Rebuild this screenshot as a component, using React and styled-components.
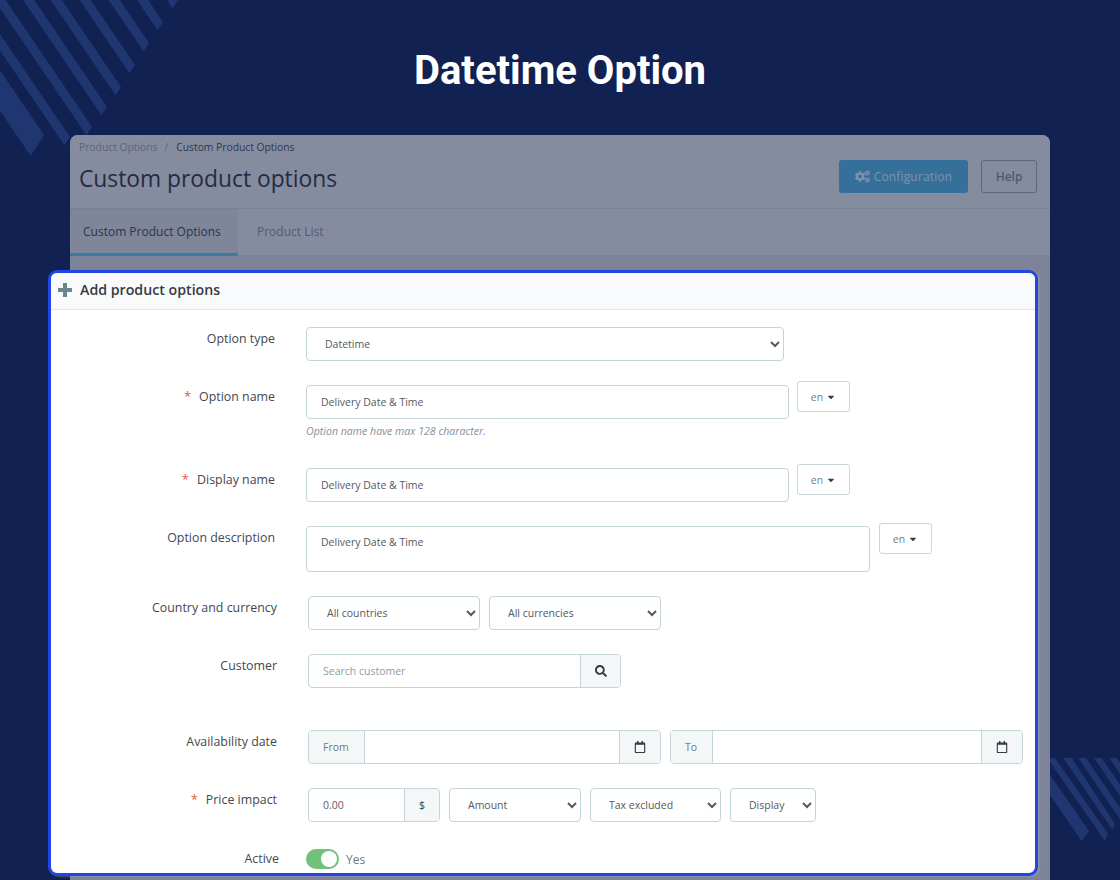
import React from "react";
import styled, { createGlobalStyle } from "styled-components";
import { FaSearch, FaCogs, FaCaretDown, FaRegCalendar } from "react-icons/fa";

const Global = createGlobalStyle`
  html, body { margin: 0; padding: 0; background: #112252; }
  * { box-sizing: border-box; }
`;

const Page = styled.div`
  position: relative;
  width: 1120px;
  height: 880px;
  overflow: hidden;
  background: #112252;
  font-family: "Open Sans", "Liberation Sans", sans-serif;
`;
const Decor = styled.svg`
  position: absolute;
  left: 0;
  top: 0;
`;
const Heading = styled.h1`
  position: relative;
  margin: 0;
  height: 135px;
  padding-top: 48px;
  text-align: center;
  font: 700 40px/46px Roboto, "Liberation Sans", sans-serif;
  color: #fff;
`;
const Panel = styled.section`
  position: relative;
  margin: 0 70px;
  height: 745px;
  border-radius: 8px 8px 0 0;
  background: #7d8398;
  display: flex;
  flex-direction: column;
`;
const PanelHead = styled.header`
  height: 74px;
  padding: 6px 13px 0 9px;
  background: #868c9f;
  border-radius: 8px 8px 0 0;
  border-bottom: 1px solid #7b8194;
  display: flex;
  justify-content: space-between;
`;
const Crumbs = styled.nav`
  font-size: 10.3px;
  line-height: 13px;
  color: #5b647e;
  span { margin: 0 8px 0 7px; }
  b { font-weight: 400; color: #2e3750; }
`;
const PageTitle = styled.h2`
  margin: 10px 0 0;
  font-size: 22.8px;
  line-height: 30px;
  font-weight: 400;
  color: #232b45;
`;
const Actions = styled.div`
  display: flex;
  gap: 13px;
  padding-top: 19px;
`;
const PrimaryButton = styled.div`
  width: 129px;
  height: 33px;
  border-radius: 3px;
  background: #35709a;
  color: #7d93ad;
  font-size: 12px;
  letter-spacing: 0.15px;
  display: flex;
  align-items: center;
  justify-content: center;
  gap: 4px;
`;
const OutlineButton = styled.div`
  width: 56px;
  height: 33px;
  border-radius: 3px;
  border: 1px solid #5a6884;
  color: #4b5977;
  font-size: 12px;
  font-weight: 600;
  display: flex;
  align-items: center;
  justify-content: center;
`;
const Tabs = styled.div`
  height: 47px;
  background: #868c9f;
  border-bottom: 1px solid #7b8194;
  display: flex;
`;
const Tab = styled.div`
  height: 47px;
  width: ${p => (p.$active ? "168px" : "auto")};
  padding-left: ${p => (p.$active ? "13px" : "19px")};
  display: flex;
  align-items: center;
  font-size: 12px;
  color: ${p => (p.$active ? "#2b3450" : "#515b77")};
  background: ${p => (p.$active ? "#7f869a" : "transparent")};
  border-bottom: 3px solid ${p => (p.$active ? "#3b7ba2" : "transparent")};
`;
const Card = styled.div`
  margin: 14px 12px 0 -22px;
  height: 606px;
  background: #fff;
  border: 3px solid #2345e6;
  border-radius: 9px;
  overflow: hidden;
  box-shadow: 2px 1px 2px rgba(170, 175, 190, 0.35);
`;
const CardHead = styled.div`
  height: 37px;
  padding: 0 0 3px 7px;
  background: #f9fafc;
  border-bottom: 1px solid #dfe6ea;
  display: flex;
  align-items: center;
  gap: 8px;
  font-size: 14.2px;
  font-weight: 600;
  color: #363a41;
`;
const PlusIcon = styled.svg`
  width: 14px;
  height: 14px;
  flex: none;
  fill: #6c868e;
`;
const Form = styled.div`
  padding-top: 17px;
`;
const Row = styled.div`
  display: flex;
  margin-top: ${p => p.$top ?? 24}px;
  &:first-child { margin-top: 0; }
`;
const Label = styled.div`
  width: 224px;
  margin-right: 31px;
  padding-top: ${p => p.$pad ?? 3}px;
  flex: none;
  text-align: right;
  font-size: 12.4px;
  line-height: 17px;
  color: #43474e;
  transform: translateX(${p => p.$shift || 0}px);
  i { font-style: normal; color: #e0603c; margin-right: 8px; font-size: 13px; }
`;
const Controls = styled.div`
  display: flex;
  align-items: flex-start;
  gap: 9px;
  padding-left: ${p => p.$indent || 0}px;
`;
const fieldCss = `
  height: 34px;
  border: 1px solid #c4d4d8;
  border-radius: 4px;
  background: #fff;
  font-family: "Open Sans", "Liberation Sans", sans-serif;
  font-size: 10.5px;
  color: #55595e;
`;
const Select = styled.select`
  ${fieldCss}
  width: ${p => p.$w}px;
  padding: 0 0 0 ${p => p.$pad ?? 14}px;
`;
const Input = styled.div`
  ${fieldCss}
  width: ${p => p.$w}px;
  padding: 0 14px;
  display: flex;
  align-items: center;
  flex: none;
`;
const Area = styled.div`
  ${fieldCss}
  height: 46px;
  width: ${p => p.$w}px;
  padding: 8px 14px;
  line-height: 14px;
`;
const FieldStack = styled.div`
  display: flex;
  flex-direction: column;
`;
const Hint = styled.div`
  margin-top: 6px;
  font-size: 10.6px;
  line-height: 13px;
  font-style: italic;
  color: #8a8f93;
  height: 13px;
`;
const LangButton = styled.div`
  width: 53px;
  height: 31px;
  margin-top: ${p => p.$top ?? -4}px;
  margin-left: ${p => p.$gap ?? 0}px;
  border: 1px solid #c9d6da;
  border-radius: 3px;
  display: flex;
  align-items: center;
  justify-content: center;
  gap: 3px;
  font-size: 10.5px;
  color: #6c7f8f;
  svg { color: #363a41; font-size: 10px; }
`;
const Group = styled.div`
  display: flex;
  width: ${p => p.$w}px;
  height: 34px;
  border: 1px solid #c4d4d8;
  border-radius: 4px;
  overflow: hidden;
  flex: none;
`;
const GroupInput = styled.div`
  flex: 1;
  padding: 0 14px;
  display: flex;
  align-items: center;
  font-size: 10.5px;
  color: ${p => (p.$muted ? "#8f9ba0" : "#5c6266")};
`;
const Addon = styled.div`
  width: ${p => p.$w}px;
  flex: none;
  background: #f4f7f8;
  ${p => (p.$lead ? "border-right" : "border-left")}: 1px solid #c4d4d8;
  display: flex;
  align-items: center;
  justify-content: ${p => (p.$text ? "flex-start" : "center")};
  padding-left: ${p => (p.$text ? "14px" : 0)};
  font-size: 10.5px;
  color: ${p => (p.$dark ? "#363a41" : "#6c7a80")};
  svg { color: #363a41; font-size: 12px; }
`;
const SwitchRow = styled.div`
  display: flex;
  align-items: center;
  gap: 7px;
  height: 20px;
  font-size: 12px;
  color: #6c7a80;
`;
const Switch = styled.div`
  width: 33px;
  height: 20px;
  padding: 2px;
  border-radius: 10px;
  background: #71c179;
  display: flex;
  justify-content: flex-end;
  &::after {
    content: "";
    width: 16px;
    height: 16px;
    border-radius: 50%;
    background: #fff;
  }
`;

const slope = 1.47;
const stripe = (cx, cy, dx, dy) => {
  const far = 260;
  return `${cx},${cy} ${cx + dx},${cy + dy} ${cx + dx - far},${cy + dy - far * slope} ${cx - far},${cy - far * slope}`;
};
const topStripes = [
  [44, 135, -13.3, 21],
  [70, 137, -5.5, 8.3],
  [92, 127, -5.5, 8.3],
  [107, 107, -5.5, 8.3],
  [121, 87, -5.5, 8.3],
  [135, 65, -5.5, 8.3],
  [149, 43, -5.5, 8.3],
  [163, 22, -5.5, 8.3],
  [178, 0, -5.5, 8.3],
];
const lowStripes = [
  "1050,775 1089,831 1081.7,841 1050,795",
  "1050,758 1055,758 1108,834 1105,841 1050,762",
  "1063.3,758 1071.7,758 1115,824 1112.6,830",
  "1078.3,758 1086,758 1150,852 1142,852",
  "1094,758 1101.7,758 1166,852 1158,852",
  "1109.3,758 1116.7,758 1181,852 1173,852",
];

const Lang = ({ gap, top }) => (
  <LangButton $gap={gap} $top={top}>en <FaCaretDown /></LangButton>
);

export default function App() {
  return (
    <Page>
      <Global />
      <Decor width="1120" height="880" viewBox="0 0 1120 880">
        <g fill="#1f3670">
          {topStripes.map((s, i) => <polygon key={i} points={stripe(...s)} />)}
          {lowStripes.map((p, i) => <polygon key={i} points={p} />)}
        </g>
      </Decor>
      <Heading>Datetime Option</Heading>
      <Panel>
        <PanelHead>
          <div>
            <Crumbs>Product Options<span>/</span><b>Custom Product Options</b></Crumbs>
            <PageTitle>Custom product options</PageTitle>
          </div>
          <Actions>
            <PrimaryButton><FaCogs size={15} /> Configuration</PrimaryButton>
            <OutlineButton>Help</OutlineButton>
          </Actions>
        </PanelHead>
        <Tabs>
          <Tab $active>Custom Product Options</Tab>
          <Tab>Product List</Tab>
        </Tabs>
        <Card>
          <CardHead>
            <PlusIcon viewBox="0 0 14 14"><path d="M5 0h4v5h5v4H9v5H5V9H0V5h5z" /></PlusIcon>
            Add product options
          </CardHead>
          <Form>
            <Row>
              <Label>Option type</Label>
              <Controls>
                <Select $w={478} defaultValue="Datetime"><option>Datetime</option></Select>
              </Controls>
            </Row>
            <Row>
              <Label><i>*</i>Option name</Label>
              <Controls>
                <FieldStack>
                  <Input $w={483}>Delivery Date &amp; Time</Input>
                  <Hint>Option name have max 128 character.</Hint>
                </FieldStack>
                <Lang gap={-1} />
              </Controls>
            </Row>
            <Row $top={30}>
              <Label><i>*</i>Display name</Label>
              <Controls>
                <Input $w={483}>Delivery Date &amp; Time</Input>
                <Lang gap={-1} />
              </Controls>
            </Row>
            <Row>
              <Label>Option description</Label>
              <Controls>
                <Area $w={564}>Delivery Date &amp; Time</Area>
                <Lang top={-3} />
              </Controls>
            </Row>
            <Row>
              <Label $shift={2}>Country and currency</Label>
              <Controls $indent={2}>
                <Select $w={172}><option>All countries</option></Select>
                <Select $w={172}><option>All currencies</option></Select>
              </Controls>
            </Row>
            <Row>
              <Label $shift={2}>Customer</Label>
              <Controls $indent={2}>
                <Group $w={313}>
                  <GroupInput $muted>Search customer</GroupInput>
                  <Addon $w={40}><FaSearch /></Addon>
                </Group>
              </Controls>
            </Row>
            <Row $top={42}>
              <Label $shift={2}>Availability date</Label>
              <Controls $indent={2}>
                <Group $w={353}>
                  <Addon $w={56} $lead $text>From</Addon>
                  <GroupInput />
                  <Addon $w={41}><FaRegCalendar /></Addon>
                </Group>
                <Group $w={353}>
                  <Addon $w={42} $lead $text>To</Addon>
                  <GroupInput />
                  <Addon $w={41}><FaRegCalendar /></Addon>
                </Group>
              </Controls>
            </Row>
            <Row>
              <Label $shift={2}><i>*</i>Price impact</Label>
              <Controls $indent={2}>
                <Group $w={132}>
                  <GroupInput>0.00</GroupInput>
                  <Addon $w={35} $dark>$</Addon>
                </Group>
                <Select $w={132}><option>Amount</option></Select>
                <Select $w={131}><option>Tax excluded</option></Select>
                <Select $w={86}><option>Display</option></Select>
              </Controls>
            </Row>
            <Row $top={27}>
              <Label $shift={4} $pad={1}>Active</Label>
              <Controls>
                <SwitchRow><Switch /> Yes</SwitchRow>
              </Controls>
            </Row>
          </Form>
        </Card>
      </Panel>
    </Page>
  );
}
